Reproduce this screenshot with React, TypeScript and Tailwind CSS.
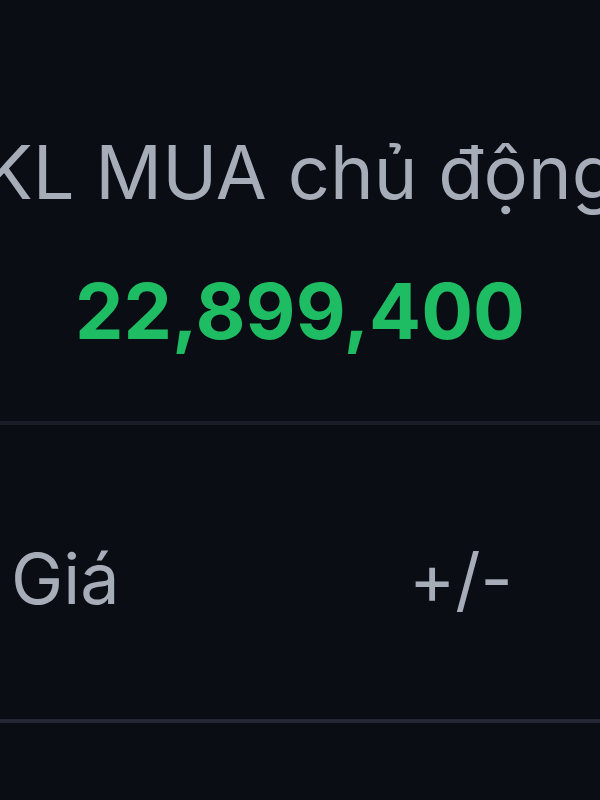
export default function App() {
  return (
    <div
      className="h-[800px] w-[600px] overflow-hidden bg-[#0b0d15]"
      style={{ fontFamily: "Inter, 'Noto Sans', sans-serif" }}
    >
      <div className="flex justify-center overflow-hidden pt-[135px] pb-[20px]">
        <span className="whitespace-nowrap text-[74px] leading-none text-[#a7acb9]">
          KL MUA chủ động
        </span>
      </div>
      <div className="mt-[44px] flex justify-center">
        <span className="whitespace-nowrap text-[77px] font-bold leading-none text-[#1fbd63]">
          22,899,400
        </span>
      </div>
      <div className="mt-[71px] h-[4px] bg-[#1a1d27]" />
      <div className="mt-[119px] grid grid-cols-[409px_1fr] text-[70px] leading-none text-[#a7acb9]">
        <span className="pl-[11px]">Giá</span>
        <span>+/-</span>
      </div>
      <div className="mt-[105px] h-[4px] bg-[#242733]" />
    </div>
  );
}
